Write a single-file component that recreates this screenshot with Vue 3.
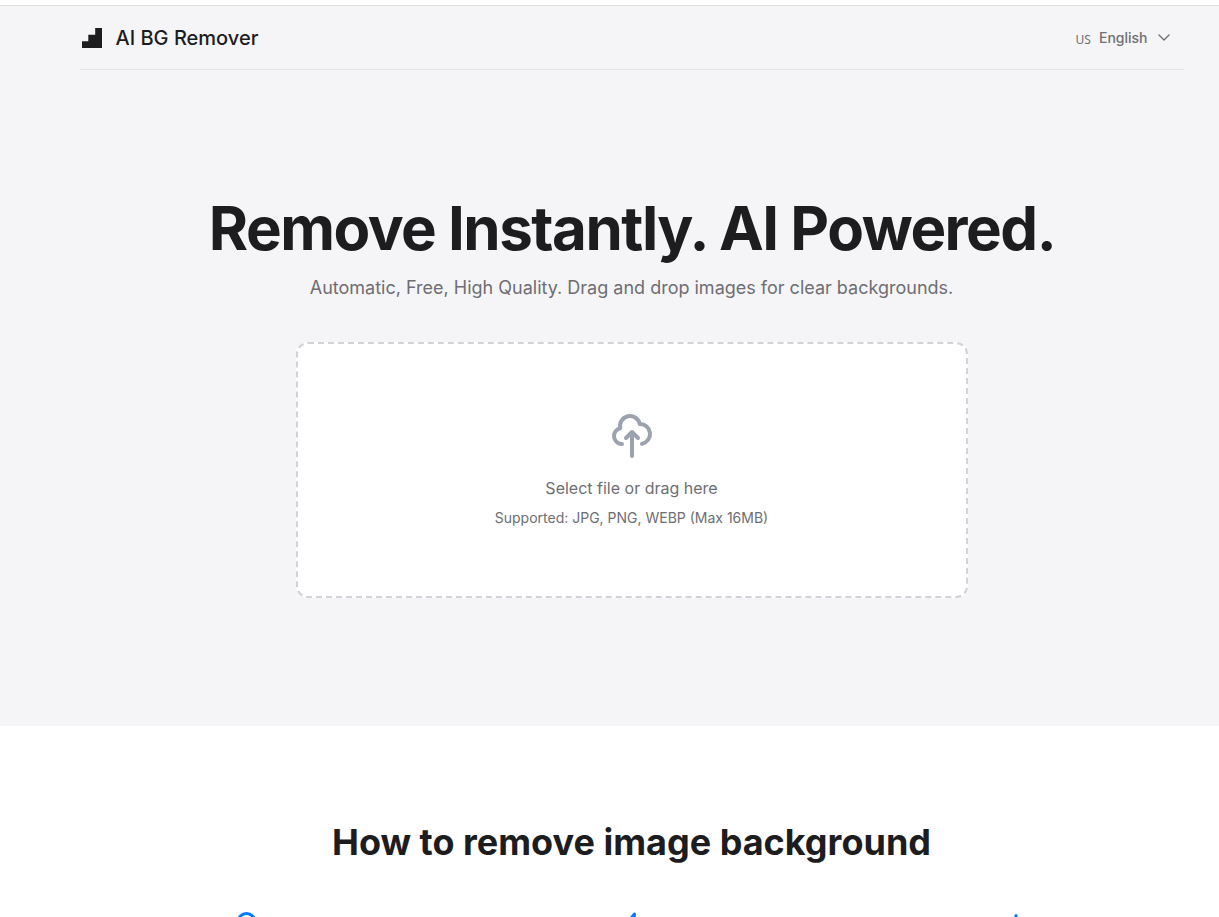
<script setup>
const steps = ['upload', 'process', 'download']
</script>

<template>
  <div class="page">
    <div class="hero">
      <header class="bar">
        <div class="brand">
          <svg class="logo" viewBox="0 0 20 20"><path d="M0 13.3h6.3V6.8h6.9V0H20v20H0z" fill="#1d1d1f" /></svg>
          <span>AI BG Remover</span>
        </div>
        <div class="lang">
          <span class="flag">US</span>
          <span class="name">English</span>
          <svg class="chevron" viewBox="0 0 12 8"><path d="M1 1l5 5 5-5" /></svg>
        </div>
      </header>
      <main class="intro">
        <h1>Remove Instantly. AI Powered.</h1>
        <p class="lead">Automatic, Free, High Quality. Drag and drop images for clear backgrounds.</p>
        <div class="drop">
          <svg class="cloud" viewBox="0 0 24 24"><path d="M7 16a4 4 0 01-.88-7.903A5 5 0 1115.9 6L16 6a5 5 0 011 9.9M15 13l-3-3m0 0l-3 3m3-3v12" /></svg>
          <p class="select">Select file or drag here</p>
          <p class="formats">Supported: JPG, PNG, WEBP (Max 16MB)</p>
        </div>
      </main>
    </div>
    <section class="guide">
      <h2>How to remove image background</h2>
      <div class="steps">
        <div v-for="step in steps" :key="step" class="step">
          <svg viewBox="0 0 48 48">
            <circle v-if="step === 'upload'" cx="23.5" cy="15" r="8.5" />
            <path v-else-if="step === 'process'" d="M26.5 7L10 27h12l-2 16 18-21H25z" />
            <path v-else d="M23 8.5v26m-10-10l10 10 10-10" />
          </svg>
        </div>
      </div>
    </section>
  </div>
</template>

<style>
body { margin: 0; background: #fff; }
</style>

<style scoped>
.page {
  box-sizing: border-box;
  height: 917px;
  padding-top: 5px;
  overflow: hidden;
  background: #fff;
  color: #1d1d1f;
  font-family: Inter, "Liberation Sans", sans-serif;
}
h1, h2, p { margin: 0; }
.hero {
  box-sizing: border-box;
  height: 721px;
  padding: 0 35px 0 80px;
  border-top: 1px solid #e0e0e3;
  background: #f5f5f7;
}
.bar {
  box-sizing: border-box;
  display: flex;
  justify-content: space-between;
  align-items: center;
  height: 64px;
  padding: 0 14px 0 2px;
  border-bottom: 1px solid #e3e3e6;
}
.brand { display: flex; align-items: center; gap: 13.5px; font-size: 20px; font-weight: 500; line-height: 24px; }
.logo { width: 20px; height: 20px; }
.lang { display: flex; align-items: center; color: #6e6e73; }
.flag { margin: 5px 8px 0 0; font-family: "Noto Sans", sans-serif; font-size: 12px; line-height: 18px; }
.name { font-size: 14px; font-weight: 500; line-height: 20px; }
.chevron { width: 12px; height: 8px; margin: 1px 0 0 10.5px; fill: none; stroke: #6e6e73; stroke-width: 1.4; stroke-linecap: round; stroke-linejoin: round; }
.intro { display: flex; flex-direction: column; align-items: center; padding-top: 122px; }
h1 { font-size: 60px; font-weight: 700; line-height: 72px; letter-spacing: -1.5px; white-space: nowrap; }
.lead { margin: 10px 1px 0 0; color: #6e6e73; font-size: 18px; line-height: 27px; white-space: nowrap; }
.drop {
  box-sizing: border-box;
  display: flex;
  flex-direction: column;
  align-items: center;
  width: 672px;
  height: 256px;
  margin-top: 41px;
  padding-top: 68px;
  border: 2px dashed #d2d2d7;
  border-radius: 12px;
  background: #fff;
  color: #6e6e73;
}
.cloud { width: 48px; height: 48px; fill: none; stroke: #9ca3af; stroke-width: 2; stroke-linecap: round; stroke-linejoin: round; }
.select { margin: 16px 1px 0 0; font-size: 16px; line-height: 24px; }
.formats { margin: 8px 1px 0 0; font-size: 14px; line-height: 20px; }
.guide { padding: 94px 36px 0 80px; }
h2 { font-size: 36px; font-weight: 700; line-height: 44px; text-align: center; }
.steps { display: grid; grid-template-columns: repeat(3, 1fr); width: 1156px; margin: 43px 0 0 -26px; }
.step { display: flex; justify-content: center; }
.step svg { width: 48px; height: 48px; fill: none; stroke: #007aff; stroke-width: 3; stroke-linecap: round; stroke-linejoin: round; }
</style>
